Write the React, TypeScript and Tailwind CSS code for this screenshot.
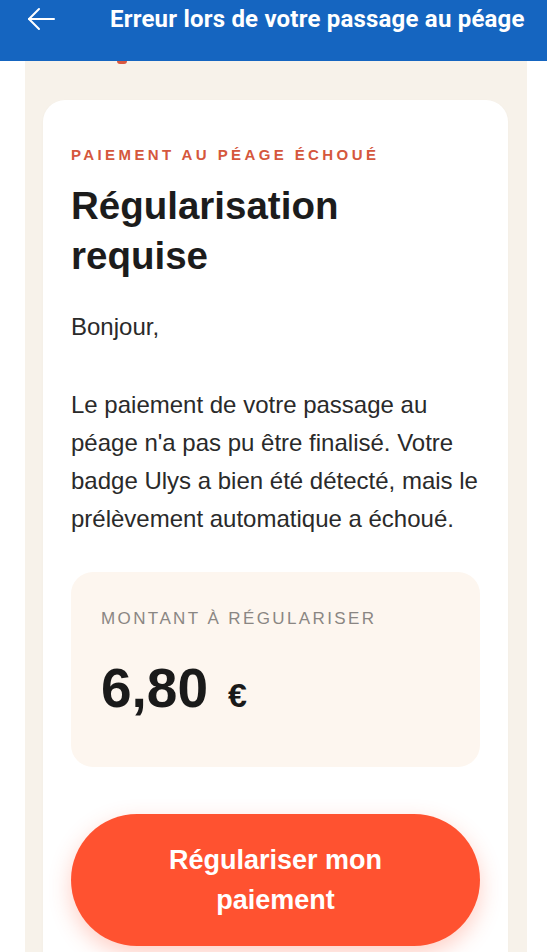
import React from 'react';

// Écran de régularisation d'un passage au péage
const BackArrow = () => (
    <svg width="28" height="24" viewBox="0 0 28 24" fill="none" stroke="white" strokeWidth="2" strokeLinecap="round" strokeLinejoin="round">
        <path d="M27 12H2" />
        <path d="M12 2L2 12L12 22" />
    </svg>
);

export default function App() {
    return (
        <div className="min-h-screen bg-white font-['Liberation_Sans',Arial,sans-serif]">
            {/* BARRE DU HAUT */}
            <header className="h-[61px] bg-[#1565c0] flex items-start pt-[4px]">
                <div className="w-[110px] flex items-center pl-[27px] h-[30px]">
                    <BackArrow />
                </div>
                <h1 className="h-[30px] leading-[30px] text-white text-[24px] font-bold font-['Roboto',sans-serif] whitespace-nowrap tracking-[0.2px]">
                    Erreur lors de votre passage au péage
                </h1>
            </header>

            {/* CONTENU */}
            <div className="mx-[25px] w-[502px] bg-[#f7f2ea] pl-[18px] pr-[19px] pb-10">
                <div className="ml-[74px] w-[10px] h-[3px] rounded-b-full bg-[#d9573f]"></div>
                <div className="mt-[36px] bg-white rounded-[22px] px-[28px] pt-[45px] pb-10 shadow-[0_1px_3px_rgba(0,0,0,0.03)]">
                    <p className="text-[15px] leading-[20px] font-bold tracking-[3.4px] text-[#d5573d] uppercase">
                        Paiement au péage échoué
                    </p>
                    <h2 className="mt-4 text-[38.5px] leading-[50px] font-bold text-[#1c1c1c]">
                        Régularisation<br />requise
                    </h2>
                    <p className="mt-[27px] text-[24px] leading-[38px] text-[#2a2a2a]">Bonjour,</p>
                    <p className="mt-[40px] text-[24px] leading-[38px] text-[#2a2a2a]">
                        Le paiement de votre passage au péage n'a pas pu être finalisé. Votre badge Ulys a bien été détecté, mais le prélèvement automatique a échoué.
                    </p>

                    <div className="mt-[34px] bg-[#fdf6ef] rounded-[22px] px-[30px] pt-[35px] pb-[52px]">
                        <p className="text-[17px] leading-[24px] tracking-[2.4px] text-[#8a8683] uppercase">
                            Montant à régulariser
                        </p>
                        <p className="mt-[30px] flex items-baseline text-[#1a1a1a] font-bold">
                            <span className="text-[55px] leading-[54px]">6,80</span>
                            <span className="ml-[20px] text-[34px] leading-[30px]">€</span>
                        </p>
                    </div>

                    <button className="mt-[47px] w-full rounded-full bg-[#ff5230] px-[48px] py-[26px] text-white text-[27px] leading-[40px] font-bold shadow-[0_8px_22px_rgba(255,82,48,0.28)]">
                        Régulariser mon paiement
                    </button>
                </div>
            </div>
        </div>
    );
}
